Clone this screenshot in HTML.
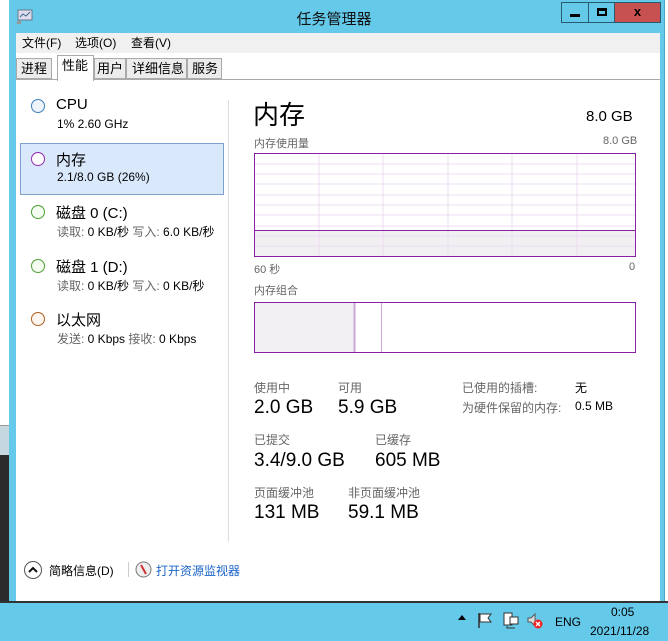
<!DOCTYPE html>
<html><head><meta charset="utf-8"><style>
*{margin:0;padding:0;box-sizing:border-box}
body{width:668px;height:641px;position:relative;overflow:hidden;background:#fff;font-family:"Liberation Sans","Noto Sans CJK SC",sans-serif;color:#000}
.a{position:absolute}
.g{color:#666}
</style></head><body>
<div class="a" style="left:0;top:0;width:9px;height:425px;background:#fff"></div>
<div class="a" style="left:0;top:425px;width:9px;height:30px;background:#c5d8e0;border-top:1px solid #999"></div>
<div class="a" style="left:0;top:455px;width:9px;height:148px;background:#2b2b2b"></div>
<div class="a" style="left:9px;top:0;width:656px;height:602px;background:#65c9ea;border-right:1px solid #4aa8c8"></div>
<div class="a" style="left:665px;top:0;width:3px;height:602px;background:#fff"></div>
<div class="a" style="left:0;top:601px;width:668px;height:2px;background:#333"></div>
<div class="a" style="left:0;top:603px;width:668px;height:38px;background:#65c9ea"></div>
<!-- title -->
<svg class="a" style="left:16px;top:9px" width="18" height="16"><rect x="2" y="1" width="14" height="10" fill="#dde" stroke="#678"/><path d="M4 8l3-3 3 2 4-4" stroke="#468" fill="none"/><rect x="1" y="12" width="4" height="3" fill="#999"/></svg>
<div class="a" style="left:0;width:668px;top:8px;text-align:center;font-size:15px;color:#111">任务管理器</div>
<div class="a" style="left:561px;top:2px;width:28px;height:21px;border:1px solid #2a5a70;background:#65c9ea"><div class="a" style="left:8px;top:11px;width:10px;height:3px;background:#000"></div></div>
<div class="a" style="left:588px;top:2px;width:27px;height:21px;border:1px solid #2a5a70;background:#65c9ea"><div class="a" style="left:8px;top:5px;width:10px;height:8px;border:2px solid #000;border-top-width:3px"></div></div>
<div class="a" style="left:614px;top:2px;width:47px;height:21px;border:1px solid #2a5a70;background:#c75050;text-align:center;font-size:13px;font-weight:bold;line-height:18px">x</div>
<!-- client -->
<div class="a" style="left:16px;top:33px;width:644px;height:568px;background:#fff"></div>
<div class="a" style="left:16px;top:33px;width:644px;height:20px;background:#f0f0f0;font-size:12px;line-height:20px"><span class="a" style="left:6px">文件(F)</span><span class="a" style="left:59px">选项(O)</span><span class="a" style="left:115px">查看(V)</span></div>
<div class="a" style="left:16px;top:79px;width:644px;height:1px;background:#aaa"></div>
<div class="a" style="left:16px;top:58px;width:36px;height:21px;background:#ececec;border:1px solid #aaa;font-size:13px;line-height:19px;padding-left:4px">进程</div>
<div class="a" style="left:57px;top:55px;width:37px;height:26px;background:#fff;border:1px solid #aaa;border-bottom:none;font-size:13px;line-height:20px;padding-left:4px">性能</div>
<div class="a" style="left:94px;top:58px;width:32px;height:21px;background:#ececec;border:1px solid #aaa;font-size:13px;line-height:19px;padding-left:2px">用户</div>
<div class="a" style="left:126px;top:58px;width:61px;height:21px;background:#ececec;border:1px solid #aaa;font-size:13px;line-height:19px;padding-left:5px">详细信息</div>
<div class="a" style="left:187px;top:58px;width:35px;height:21px;background:#ececec;border:1px solid #aaa;font-size:13px;line-height:19px;padding-left:4px">服务</div>
<!-- sidebar -->
<div class="a" style="left:20px;top:143px;width:204px;height:52px;background:#dae8fc;border:1px solid #7da2ce"></div>
<div class="a" style="left:228px;top:100px;width:1px;height:442px;background:#ddd"></div>
<div class="a" style="left:31px;top:99px;width:14px;height:14px;border-radius:50%;border:1px solid #3a7fc0;background:#eef4fa"></div>
<div class="a" style="left:56px;top:96px;font-size:15px">CPU</div>
<div class="a" style="left:57px;top:117px;font-size:12px">1% 2.60 GHz</div>
<div class="a" style="left:31px;top:152px;width:14px;height:14px;border-radius:50%;border:1px solid #9528b4;background:#fff"></div>
<div class="a" style="left:56px;top:149px;font-size:15px">内存</div>
<div class="a" style="left:57px;top:170px;font-size:12px">2.1/8.0 GB (26%)</div>
<div class="a" style="left:31px;top:205px;width:14px;height:14px;border-radius:50%;border:1px solid #4da033;background:#f4fbf0"></div>
<div class="a" style="left:56px;top:202px;font-size:15px">磁盘 0 (C:)</div>
<div class="a" style="left:57px;top:223px;font-size:12px;white-space:nowrap"><span class="g">读取:</span> 0 KB/秒 <span class="g">写入:</span> 6.0 KB/秒</div>
<div class="a" style="left:31px;top:259px;width:14px;height:14px;border-radius:50%;border:1px solid #4da033;background:#f4fbf0"></div>
<div class="a" style="left:56px;top:256px;font-size:15px">磁盘 1 (D:)</div>
<div class="a" style="left:57px;top:277px;font-size:12px;white-space:nowrap"><span class="g">读取:</span> 0 KB/秒 <span class="g">写入:</span> 0 KB/秒</div>
<div class="a" style="left:31px;top:312px;width:14px;height:14px;border-radius:50%;border:1px solid #b25f1c;background:#fdf6f0"></div>
<div class="a" style="left:56px;top:309px;font-size:15px">以太网</div>
<div class="a" style="left:57px;top:330px;font-size:12px;white-space:nowrap"><span class="g">发送:</span> 0 Kbps <span class="g">接收:</span> 0 Kbps</div>
<!-- main -->
<div class="a" style="left:253px;top:95px;font-size:26px">内存</div>
<div class="a" style="left:586px;top:108px;font-size:15px">8.0 GB</div>
<div class="a g" style="left:254px;top:135px;font-size:11px">内存使用量</div>
<div class="a g" style="left:603px;top:135px;font-size:11px">8.0 GB</div>
<svg class="a" style="left:254px;top:153px" width="382" height="104">
<rect x="0" y="77" width="382" height="27" fill="#f1eff2"/>
<g stroke="#ecdcf0" stroke-width="1">
<path d="M65 0V104M129 0V104M194 0V104M258 0V104M323 0V104"/>
<path d="M0 11H382M0 21H382M0 31H382M0 42H382M0 52H382M0 62H382M0 73H382M0 83H382M0 93H382"/>
</g>
<path d="M0 77.5H382" stroke="#8b20a8"/>
<rect x="0.5" y="0.5" width="381" height="103" fill="none" stroke="#8b20a8"/>
</svg>
<div class="a g" style="left:254px;top:261px;font-size:11px">60 秒</div>
<div class="a g" style="left:629px;top:261px;font-size:11px">0</div>
<div class="a g" style="left:254px;top:282px;font-size:11px">内存组合</div>
<svg class="a" style="left:254px;top:302px" width="382" height="51">
<rect x="0" y="0" width="100" height="51" fill="#f1eff2"/>
<path d="M100.5 0V51" stroke="#c9a8d8" stroke-width="2"/>
<path d="M127.5 0V51" stroke="#c9a8d8"/>
<rect x="0.5" y="0.5" width="381" height="50" fill="none" stroke="#8b20a8"/>
</svg>
<div class="a g" style="left:254px;top:379px;font-size:12px">使用中</div>
<div class="a g" style="left:338px;top:379px;font-size:12px">可用</div>
<div class="a" style="left:254px;top:397px;font-size:19px">2.0 GB</div>
<div class="a" style="left:338px;top:397px;font-size:19px">5.9 GB</div>
<div class="a g" style="left:462px;top:379px;font-size:12px">已使用的插槽:</div>
<div class="a" style="left:575px;top:379px;font-size:12px">无</div>
<div class="a g" style="left:462px;top:399px;font-size:12px">为硬件保留的内存:</div>
<div class="a" style="left:575px;top:399px;font-size:12px">0.5 MB</div>
<div class="a g" style="left:254px;top:431px;font-size:12px">已提交</div>
<div class="a g" style="left:375px;top:431px;font-size:12px">已缓存</div>
<div class="a" style="left:254px;top:450px;font-size:19px">3.4/9.0 GB</div>
<div class="a" style="left:375px;top:450px;font-size:19px">605 MB</div>
<div class="a g" style="left:254px;top:484px;font-size:12px">页面缓冲池</div>
<div class="a g" style="left:348px;top:484px;font-size:12px">非页面缓冲池</div>
<div class="a" style="left:254px;top:502px;font-size:19px">131 MB</div>
<div class="a" style="left:348px;top:502px;font-size:19px">59.1 MB</div>
<!-- footer -->
<svg class="a" style="left:23px;top:560px" width="20" height="20"><circle cx="10" cy="10" r="8.5" fill="#fff" stroke="#555"/><path d="M6 12l4-4 4 4" stroke="#111" stroke-width="2" fill="none"/></svg>
<div class="a" style="left:49px;top:562px;font-size:12px">简略信息(D)</div>
<div class="a" style="left:128px;top:562px;width:1px;height:15px;background:#ccc"></div>
<svg class="a" style="left:135px;top:561px" width="17" height="17"><circle cx="8.5" cy="8.5" r="7.5" fill="#eee" stroke="#777"/><path d="M6 4l5 9" stroke="#c33" stroke-width="2"/></svg>
<div class="a" style="left:156px;top:562px;font-size:12px;color:#1a64c8">打开资源监视器</div>
<!-- taskbar -->
<div class="a" style="left:458px;top:615px;width:0;height:0;border-left:4px solid transparent;border-right:4px solid transparent;border-bottom:5px solid #000"></div>
<svg class="a" style="left:476px;top:611px" width="18" height="18"><path d="M3 2V17" stroke="#333" stroke-width="1.5"/><path d="M4 3h11l-3 4 3 4H4z" fill="#fff" stroke="#333"/></svg>
<svg class="a" style="left:502px;top:611px" width="18" height="18"><rect x="2" y="2" width="8" height="12" fill="#fff" stroke="#333"/><rect x="8" y="6" width="8" height="7" fill="#fff" stroke="#333"/><path d="M5 15v2h8" stroke="#333" fill="none"/></svg>
<svg class="a" style="left:526px;top:611px" width="18" height="18"><path d="M2 7h3l4-4v12l-4-4H2z" fill="#ddd" stroke="#555"/><circle cx="12" cy="13" r="4.5" fill="#e22"/><path d="M10 11l4 4M14 11l-4 4" stroke="#fff" stroke-width="1.4"/></svg>
<div class="a" style="left:555px;top:615px;font-size:12px">ENG</div>
<div class="a" style="left:611px;top:605px;font-size:12px">0:05</div>
<div class="a" style="left:590px;top:624px;font-size:12px">2021/11/28</div>
</body></html>
